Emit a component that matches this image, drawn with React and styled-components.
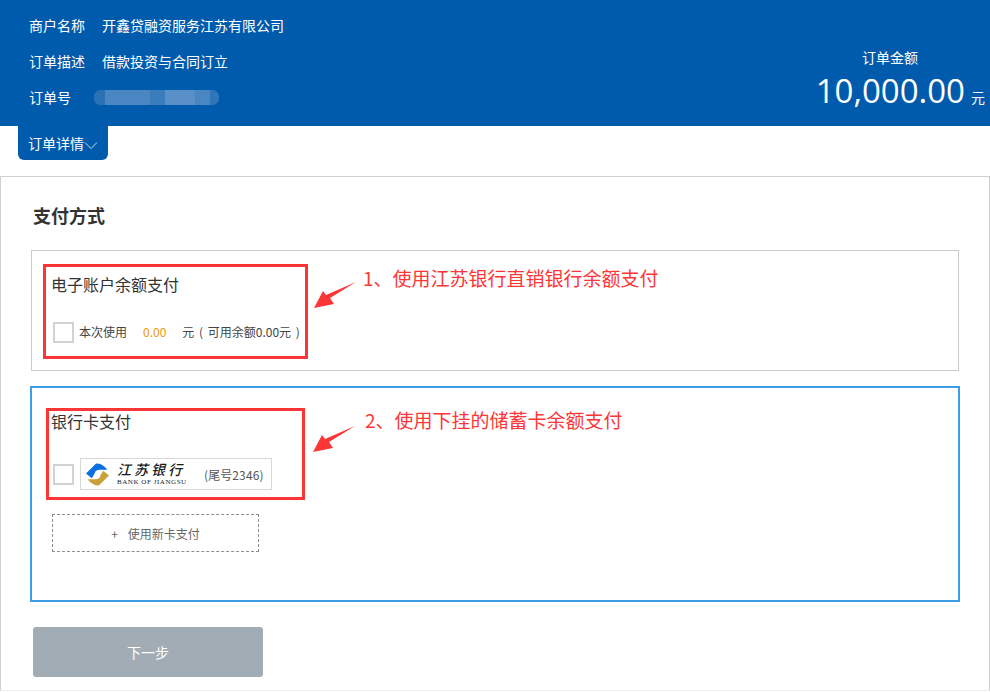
import styled, { createGlobalStyle } from "styled-components";

const GlobalStyle = createGlobalStyle`
  html, body {
    margin: 0;
    padding: 0;
    background: #fff;
    font-family: "Noto Sans CJK SC", "Liberation Sans", sans-serif;
  }
  * { box-sizing: border-box; }
`;

const Page = styled.div`
  width: 990px;
  height: 692px;
  position: relative;
  overflow: hidden;
  background: #fff;
`;

const Header = styled.header`
  height: 126px;
  background: #005bac;
  color: #fff;
  display: flex;
  justify-content: space-between;
  padding: 7px 5px 0 29px;
`;

const InfoList = styled.div`
  display: flex;
  flex-direction: column;
`;

const InfoRow = styled.div`
  display: flex;
  align-items: center;
  height: 36px;
  font-size: 14px;
`;

const InfoLabel = styled.span`
  width: 73px;
`;

const Masked = styled.div`
  display: flex;
  width: 125px;
  height: 15px;
  margin-left: -8px;
  border-radius: 7px;
  overflow: hidden;
  background: #2f76b8;
`;

const MaskedPart = styled.span`
  flex: ${(props) => props.$grow};
  background: ${(props) => props.$color};
`;

const Amount = styled.div`
  display: flex;
  flex-direction: column;
  align-items: flex-end;
  padding-top: 41px;
`;

const AmountLabel = styled.div`
  width: 123px;
  font-size: 14px;
  line-height: 18px;
  margin-bottom: 5px;
`;

const AmountValue = styled.div`
  display: flex;
  align-items: baseline;
  gap: 6px;
  font-family: "Open Sans", sans-serif;
  font-size: 33px;
  line-height: 40px;
`;

const Currency = styled.span`
  font-family: "Noto Sans CJK SC", sans-serif;
  font-size: 14px;
`;

const DetailTab = styled.div`
  width: 90px;
  height: 34px;
  margin-left: 18px;
  background: #005bac;
  color: #fff;
  border-radius: 0 0 6px 6px;
  font-size: 14px;
  display: flex;
  align-items: center;
  padding-left: 10px;

  svg {
    margin-top: 4px;
  }
`;

const Panel = styled.section`
  height: 515px;
  margin-top: 16px;
  border: 1px solid #d0d0d0;
  border-bottom-color: #eceef2;
  padding: 26px 30px 0 30px;
`;

const Title = styled.h2`
  margin: 0 0 23px 2px;
  font-size: 18px;
  line-height: 24px;
  font-weight: 700;
  color: #333;
`;

const PayBox = styled.div`
  height: ${(props) => props.$height}px;
  margin: ${(props) => (props.$active ? "15px -1px 0 -1px" : "0")};
  border: ${(props) => (props.$active ? "2px solid #3d9ee8" : "1px solid #ccc")};
  padding: 23px 20px 0 20px;
`;

const BoxTitle = styled.div`
  font-size: 16px;
  line-height: 22px;
  color: #333;
  margin-top: -1px;
  margin-left: -1px;
`;

const OptionRow = styled.div`
  display: flex;
  align-items: center;
  margin-top: ${(props) => props.$top}px;
  font-size: 12px;
  color: #444;
`;

const Check = styled.span`
  width: 21px;
  height: 21px;
  flex: none;
  border: 2px solid #d2d2d2;
  background: #fff;
  margin: ${(props) => props.$drop}px 5px 0 1px;
`;

const Orange = styled.span`
  margin: 0 16px;
  color: #f39800;
  font-size: 12px;
`;

const Balance = styled.span`
  word-spacing: 2px;
`;

const BankCard = styled.div`
  width: 192px;
  height: 32px;
  margin-left: 1px;
  border: 1px solid #d8d8d8;
  display: flex;
  align-items: center;
  padding-left: 5px;
  color: #555;
  font-size: 12px;
`;

const BankName = styled.div`
  display: flex;
  flex-direction: column;
  gap: 3px;
  width: 70px;
  margin: 0 17px 0 8px;
  color: #1a1a1a;
`;

const BankCn = styled.span`
  font-family: "Noto Sans CJK SC", serif;
  font-size: 14px;
  line-height: 14px;
  font-weight: 500;
  font-style: italic;
  letter-spacing: 3px;
  white-space: nowrap;
`;

const BankEn = styled.span`
  font-family: "Liberation Serif", serif;
  font-size: 7px;
  line-height: 7px;
  letter-spacing: 0.55px;
  white-space: nowrap;
`;

const BankTail = styled.span`
  font-size: 12px;
  letter-spacing: 0.1px;
`;

const AddCard = styled.div`
  width: 207px;
  height: 38px;
  margin-top: 24px;
  border: 1px dashed #8e8e8e;
  display: flex;
  align-items: center;
  justify-content: center;
  gap: 10px;
  font-size: 12px;
  color: #666;
`;

const NextButton = styled.button`
  display: block;
  width: 230px;
  height: 50px;
  margin: 25px 0 0 2px;
  border: 0;
  border-radius: 3px;
  background: #a2acb4;
  color: #fff;
  font-family: inherit;
  font-size: 14px;
`;

/* 标注层：红框、箭头和说明文字都盖在页面上 */
const RedFrame = styled.div`
  position: absolute;
  left: ${(props) => props.$x}px;
  top: ${(props) => props.$y}px;
  width: ${(props) => props.$w}px;
  height: ${(props) => props.$h}px;
  border: 3px solid #fc3636;
  pointer-events: none;
`;

const Note = styled.div`
  position: absolute;
  left: ${(props) => props.$x}px;
  top: ${(props) => props.$y}px;
  color: #fc3636;
  font-size: 19px;
  line-height: 24px;
  white-space: nowrap;
`;

const ArrowSvg = styled.svg`
  position: absolute;
  left: ${(props) => props.$x}px;
  top: ${(props) => props.$y}px;
`;

function Arrow({ x, y }) {
  return (
    <ArrowSvg $x={x} $y={y} width="44" height="28" viewBox="0 0 44 28">
      <path d="M43 1 L17 17 L21 23 L1 27 L10 10 L13 14 Z" fill="#fc3636" />
    </ArrowSvg>
  );
}

function BankLogo() {
  const swirl = "M0 11 L10 1 C13 -1 20 3 22 7 L14 7 C11 7 9 9 9 11 L6 16 Z";
  return (
    <svg width="23" height="23" viewBox="0 0 24 24">
      <path d={swirl} fill="#0a6fe0" />
      <path d={swirl} fill="#c9a13b" transform="rotate(180 12 12)" />
    </svg>
  );
}

export default function App() {
  return (
    <Page>
      <GlobalStyle />
      <Header>
        <InfoList>
          <InfoRow>
            <InfoLabel>商户名称</InfoLabel>
            开鑫贷融资服务江苏有限公司
          </InfoRow>
          <InfoRow>
            <InfoLabel>订单描述</InfoLabel>
            借款投资与合同订立
          </InfoRow>
          <InfoRow>
            <InfoLabel>订单号</InfoLabel>
            <Masked>
              <MaskedPart $grow={11} $color="#2a71b5" />
              <MaskedPart $grow={45} $color="#4a86c2" />
              <MaskedPart $grow={15} $color="#3b7cbc" />
              <MaskedPart $grow={30} $color="#5a90c8" />
              <MaskedPart $grow={15} $color="#4a86c2" />
              <MaskedPart $grow={9} $color="#2f76b8" />
            </Masked>
          </InfoRow>
        </InfoList>
        <Amount>
          <AmountLabel>订单金额</AmountLabel>
          <AmountValue>
            10,000.00
            <Currency>元</Currency>
          </AmountValue>
        </Amount>
      </Header>
      <DetailTab>
        订单详情
        <svg width="14" height="7" viewBox="0 0 14 7">
          <path d="M1 0.5 L7 6.5 L13 0.5" fill="none" stroke="#c8d8ec" strokeWidth="1" />
        </svg>
      </DetailTab>
      <Panel>
        <Title>支付方式</Title>
        <PayBox $height={121}>
          <BoxTitle>电子账户余额支付</BoxTitle>
          <OptionRow $top={25}>
            <Check $drop={2} />
            本次使用
            <Orange>0.00</Orange>
            <Balance>元 ( 可用余额0.00元 )</Balance>
          </OptionRow>
        </PayBox>
        <PayBox $active $height={216}>
          <BoxTitle>银行卡支付</BoxTitle>
          <OptionRow $top={26}>
            <Check $drop={0} />
            <BankCard>
              <BankLogo />
              <BankName>
                <BankCn>江苏银行</BankCn>
                <BankEn>BANK OF JIANGSU</BankEn>
              </BankName>
              <BankTail>(尾号2346)</BankTail>
            </BankCard>
          </OptionRow>
          <AddCard>
            <span>+</span>
            <span>使用新卡支付</span>
          </AddCard>
        </PayBox>
        <NextButton>下一步</NextButton>
      </Panel>

      <RedFrame $x={43} $y={264} $w={265} $h={95} />
      <Arrow x={313} y={281} />
      <Note $x={363} $y={266}>1、使用江苏银行直销银行余额支付</Note>
      <RedFrame $x={46} $y={408} $w={259} $h={92} />
      <Arrow x={312} y={425} />
      <Note $x={365} $y={408}>2、使用下挂的储蓄卡余额支付</Note>
    </Page>
  );
}
